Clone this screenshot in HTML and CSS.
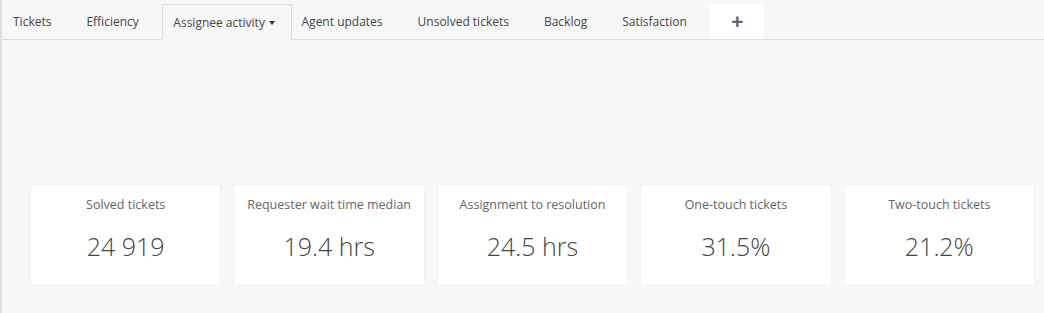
FILE: index.html
```html
<!DOCTYPE html>
<html>
<head>
    <meta charset="utf-8">
    <title>Dashboard</title>
    <link rel="stylesheet" href="styles.css">
</head>
<body>
    <div class="page">
        <div class="tabs">
            <div class="tab first">Tickets</div>
            <div class="tab">Efficiency</div>
            <div class="tab active">Assignee activity <span class="caret"></span></div>
            <div class="tab">Agent updates</div>
            <div class="tab">Unsolved tickets</div>
            <div class="tab">Backlog</div>
            <div class="tab">Satisfaction</div>
            <div class="tab add">+</div>
        </div>
        <div class="cards">
            <div class="card">
                <div class="label">Solved tickets</div>
                <div class="value">24 919</div>
            </div>
            <div class="card">
                <div class="label">Requester wait time median</div>
                <div class="value">19.4 hrs</div>
            </div>
            <div class="card">
                <div class="label">Assignment to resolution</div>
                <div class="value">24.5 hrs</div>
            </div>
            <div class="card">
                <div class="label">One-touch tickets</div>
                <div class="value">31.5%</div>
            </div>
            <div class="card">
                <div class="label">Two-touch tickets</div>
                <div class="value">21.2%</div>
            </div>
        </div>
    </div>
</body>
</html>
```

FILE: styles.css
```css
body{
	margin: 0px;
	padding: 0px;
	background-color: #f7f7f7;
	font-family: "Open Sans", "Noto Sans", sans-serif;
	color: #444;
}
div.page{
	height: 313px;
	border-left: 2px solid #dedede;
	box-sizing: border-box;
}
div.tabs{
	display: flex;
	flex-flow: row nowrap;
	height: 35px;
	padding-top: 4px;
	border-bottom: 1px solid #dcdcdc;
}
div.tab{
	font-size: 12px;
	color: #444;
	padding: 0 17.5px;
	line-height: 36px;
	white-space: nowrap;
}
div.tab.first{
	padding-left: 11px;
}
div.tab.active{
	margin: 0 -8px -1px 6px;
	padding: 0 16px 0 10px;
	border: 1px solid #dcdcdc;
	border-bottom-color: #f7f7f7;
	line-height: 35px;
}
span.caret{
	display: inline-block;
	vertical-align: middle;
	margin-left: 1px;
	margin-top: -2px;
	border-top: 4px solid #333;
	border-left: 3px solid transparent;
	border-right: 3px solid transparent;
}
div.tab.add{
	margin-left: 6px;
	width: 54px;
	padding: 0;
	text-align: center;
	background-color: #fff;
	font-size: 22px;
	font-weight: bold;
	color: #666;
	line-height: 33px;
}
div.cards{
	display: flex;
	flex-flow: row nowrap;
	gap: 12px;
	padding: 144px 9px 0 28px;
}
div.card{
	flex: 1;
	height: 102px;
	background-color: #fff;
	border: 1px solid #f2f2f2;
	border-radius: 3px;
	box-sizing: border-box;
	text-align: center;
}
div.label{
	font-size: 12.5px;
	color: #666;
	margin-top: 11px;
}
div.value{
	font-size: 25px;
	font-weight: 300;
	color: #444;
	margin-top: 16px;
}
```
